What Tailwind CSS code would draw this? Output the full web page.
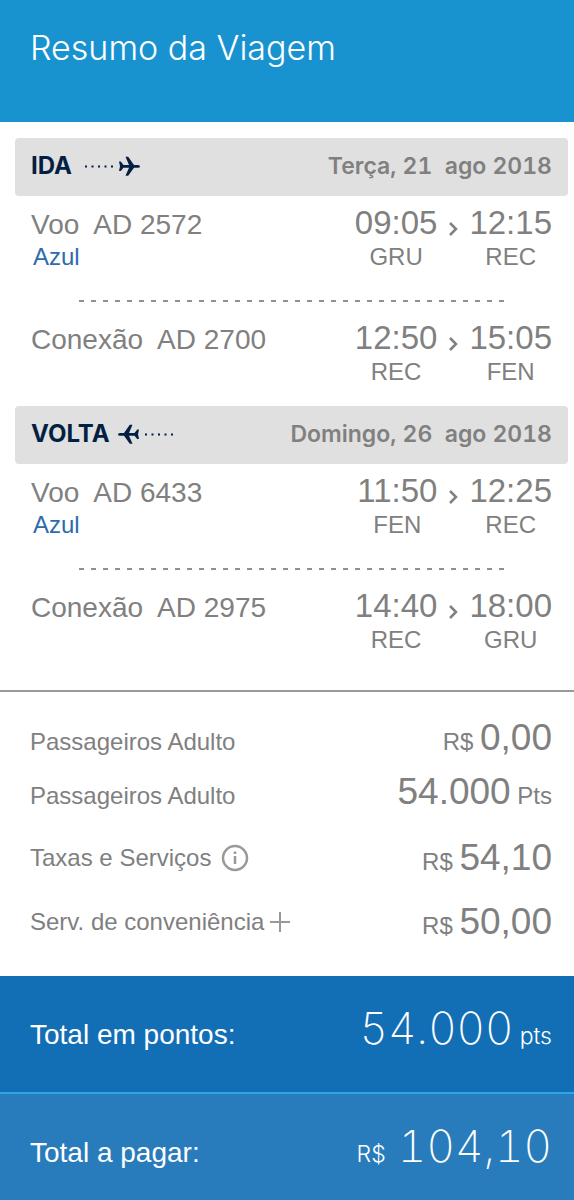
<!DOCTYPE html>
<html lang="pt-BR">
<head>
  <meta charset="UTF-8">
  <meta name="viewport" content="width=device-width, initial-scale=1.0">
  <title>Resumo da Viagem</title>
  <script src="https://cdn.jsdelivr.net/npm/@tailwindcss/browser@4"></script>
</head>
<body class="bg-white font-['Liberation_Sans',Arial,sans-serif] text-[#808080]">
  <header class="bg-[#1893d0] px-[30px] pt-7 pb-[54px]">
    <h1 class="font-['Inter',sans-serif] font-light text-[34px] leading-10 text-white">Resumo da Viagem</h1>
  </header>

  <main>
    <!-- ida -->
    <section class="pt-4 pb-0.5 pl-[15px] pr-1.5">
      <header class="flex items-center justify-between h-[58px] pb-0.5 px-4 rounded bg-[#e0e0e0] font-['Inter',sans-serif]">
        <h2 class="flex items-center gap-3 text-2xl text-[#031f42] font-bold">
          IDA
          <svg class="w-14 h-5" viewBox="0 0 56 20" fill="currentColor" aria-hidden="true">
            <path d="M1 9.500h2v2H1zM7.500 9.500h2v2h-2zM14 9.500h2v2h-2zM20.500 9.500h2v2h-2zM27 9.500h2v2h-2z"/>
            <path d="M35 5.500h1.800L39.500 9H45L41.500 0.800h2.700L50 9h4q2 .3 2 1.400t-2 1.400h-4L44.200 19.800h-2.700l3.500-8h-5.500L36.800 15H35l1-4.700z"/>
          </svg>
        </h2>
        <p class="text-[23px] font-semibold tabular-nums whitespace-pre">Terça, 21  ago 2018</p>
      </header>
      <div class="flex justify-between pt-[9px] px-4">
        <div>
          <p class="text-[28px] leading-10 whitespace-pre">Voo  AD 2572</p>
          <a href="#" class="block pl-0.5 -mt-1 text-2xl text-[#2d6cab]">Azul</a>
        </div>
        <div class="flex gap-2 text-center">
          <p class="text-[33px] leading-9">09:05<span class="block text-2xl">GRU</span></p>
          <svg class="w-4 h-4 mt-4" viewBox="0 0 16 16" fill="none" stroke="currentColor" stroke-width="2.500" aria-hidden="true"><path d="M5 2l6 6-6 6"/></svg>
          <p class="text-[33px] leading-9">12:15<span class="block text-2xl">REC</span></p>
        </div>
      </div>
      <div class="h-0.5 mt-[27px] mx-16 bg-[repeating-linear-gradient(to_right,#909090_0_5px,transparent_5px_12px)]"></div>
      <div class="flex justify-between pt-[18px] px-4">
        <p class="text-[28px] leading-10 whitespace-pre">Conexão  AD 2700</p>
        <div class="flex gap-2 text-center">
          <p class="text-[33px] leading-9">12:50<span class="block text-2xl">REC</span></p>
          <svg class="w-4 h-4 mt-4" viewBox="0 0 16 16" fill="none" stroke="currentColor" stroke-width="2.500" aria-hidden="true"><path d="M5 2l6 6-6 6"/></svg>
          <p class="text-[33px] leading-9">15:05<span class="block text-2xl">FEN</span></p>
        </div>
      </div>
    </section>

    <!-- volta -->
    <section class="pt-4 pb-[34px] pl-[15px] pr-1.5 border-b-2 border-[#999999]">
      <header class="flex items-center justify-between h-[58px] pb-0.5 px-4 rounded bg-[#e0e0e0] font-['Inter',sans-serif]">
        <h2 class="flex items-center gap-2 text-2xl text-[#031f42] font-bold">
          VOLTA
          <svg class="w-14 h-5" viewBox="0 0 56 20" fill="currentColor" aria-hidden="true">
            <path d="M27 9.500h2v2h-2zM33.500 9.500h2v2h-2zM40 9.500h2v2h-2zM46.500 9.500h2v2h-2zM53 9.500h2v2h-2z"/>
            <path d="M21 5.500h-1.800L16.500 9H11l3.500-8.200h-2.700L6 9H2q-2 .3-2 1.400t2 1.400h4l5.800 8h2.700l-3.500-8h5.500l2.700 3.200H21l-1-4.700z"/>
          </svg>
        </h2>
        <p class="text-[23px] font-semibold tabular-nums whitespace-pre">Domingo, 26  ago 2018</p>
      </header>
      <div class="flex justify-between pt-[9px] px-4">
        <div>
          <p class="text-[28px] leading-10 whitespace-pre">Voo  AD 6433</p>
          <a href="#" class="block pl-0.5 -mt-1 text-2xl text-[#2d6cab]">Azul</a>
        </div>
        <div class="flex gap-2 text-center">
          <p class="text-[33px] leading-9">11:50<span class="block text-2xl">FEN</span></p>
          <svg class="w-4 h-4 mt-4" viewBox="0 0 16 16" fill="none" stroke="currentColor" stroke-width="2.500" aria-hidden="true"><path d="M5 2l6 6-6 6"/></svg>
          <p class="text-[33px] leading-9">12:25<span class="block text-2xl">REC</span></p>
        </div>
      </div>
      <div class="h-0.5 mt-[27px] mx-16 bg-[repeating-linear-gradient(to_right,#909090_0_5px,transparent_5px_12px)]"></div>
      <div class="flex justify-between pt-[18px] px-4">
        <p class="text-[28px] leading-10 whitespace-pre">Conexão  AD 2975</p>
        <div class="flex gap-2 text-center">
          <p class="text-[33px] leading-9">14:40<span class="block text-2xl">REC</span></p>
          <svg class="w-4 h-4 mt-4" viewBox="0 0 16 16" fill="none" stroke="currentColor" stroke-width="2.500" aria-hidden="true"><path d="M5 2l6 6-6 6"/></svg>
          <p class="text-[33px] leading-9">18:00<span class="block text-2xl">GRU</span></p>
        </div>
      </div>
    </section>

    <!-- valores -->
    <dl class="pt-[26px] pb-[22px] pl-[30px] pr-[22px] text-2xl">
      <div class="flex items-baseline justify-between h-[54px]">
        <dt>Passageiros Adulto</dt>
        <dd>R$ <span class="text-[37px] leading-10">0,00</span></dd>
      </div>
      <div class="flex items-baseline justify-between h-[54px]">
        <dt>Passageiros Adulto</dt>
        <dd><span class="text-[37px] leading-10">54.000</span> Pts</dd>
      </div>
      <div class="flex items-center justify-between h-16">
        <dt class="flex items-center gap-2.5">
          Taxas e Serviços
          <button type="button" aria-label="Informações sobre taxas">
            <svg class="size-7" viewBox="0 0 28 28" fill="none" stroke="#999999" stroke-width="2.500"><circle cx="14" cy="14" r="12"/><path d="M14 12v8M14 7.500v2.500"/></svg>
          </button>
        </dt>
        <dd>R$ <span class="text-[37px] leading-10">54,10</span></dd>
      </div>
      <div class="flex items-center justify-between h-16">
        <dt class="flex items-center gap-1.5">
          Serv. de conveniência
          <button type="button" aria-label="Ver detalhes">
            <svg class="size-5" viewBox="0 0 20 20" fill="none" stroke="#999999" stroke-width="2"><path d="M10 0v20M0 10h20"/></svg>
          </button>
        </dt>
        <dd>R$ <span class="text-[37px] leading-10">50,00</span></dd>
      </div>
    </dl>
  </main>

  <footer class="text-white tabular-nums">
    <div class="flex items-baseline justify-between h-[118px] pt-5 pl-[30px] pr-[22px] bg-[#126eb5] border-b-2 border-[#2ca6e5]">
      <p class="text-[28px]">Total em pontos:</p>
      <p class="text-[23px] font-['Inter',sans-serif] font-light"><span class="text-[44px] leading-16 font-extralight">54.000</span> pts</p>
    </div>
    <div class="flex items-baseline justify-between h-[106px] pt-5 pl-[30px] pr-[22px] bg-[#287cbc]">
      <p class="text-[28px]">Total a pagar:</p>
      <p class="text-[23px] font-['Inter',sans-serif] font-light whitespace-pre">R$  <span class="text-[44px] leading-16 font-extralight">104,10</span></p>
    </div>
  </footer>
</body>
</html>
